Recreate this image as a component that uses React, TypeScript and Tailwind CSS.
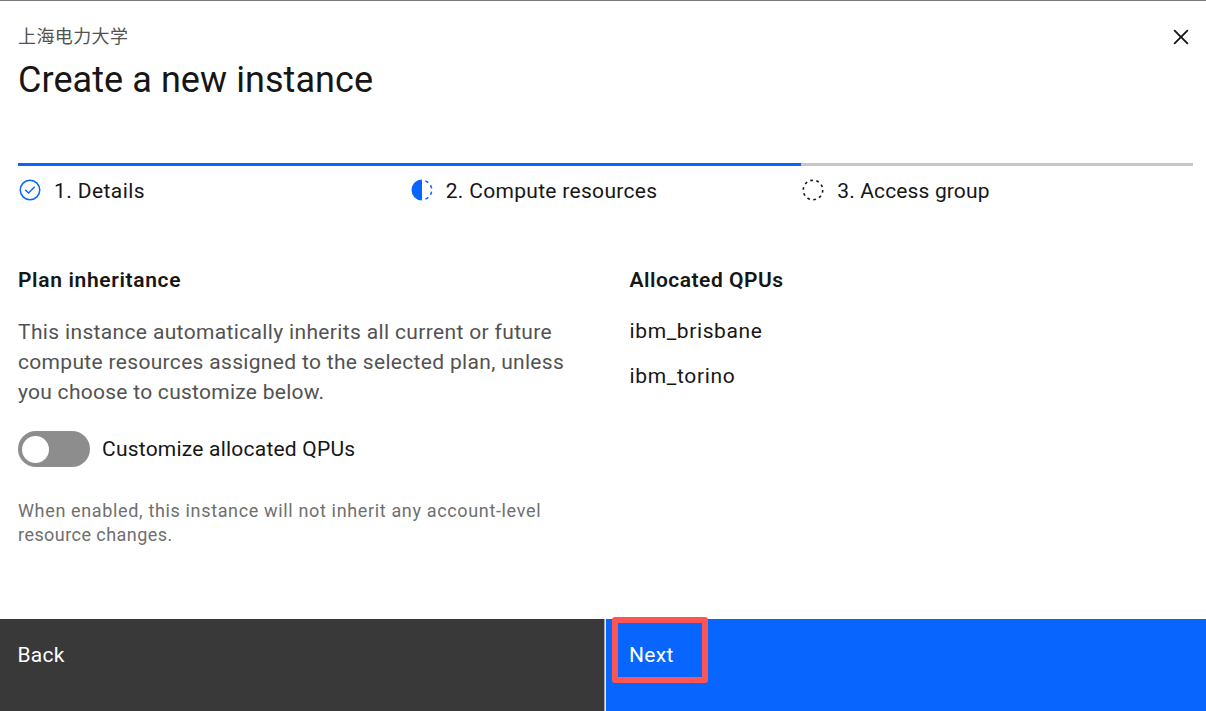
import type { ReactNode } from "react";

function CompleteIcon() {
  return (
    <svg className="size-6 shrink-0 fill-[#0866ff]" viewBox="0 0 32 32" aria-hidden="true">
      <path d="M14 21.414l-5-5.001L10.413 15 14 18.586 21.585 11 23 12.415 14 21.414z" />
      <path d="M16 2a14 14 0 1 0 14 14A14 14 0 0 0 16 2Zm0 26a12 12 0 1 1 12-12 12 12 0 0 1-12 12Z" />
    </svg>
  );
}

function CurrentIcon() {
  return (
    <svg className="size-6 shrink-0 fill-[#0866ff]" viewBox="0 0 32 32" aria-hidden="true">
      <path d="M23.7642 6.8593l1.2851-1.5315A13.976 13.976 0 0 0 20.8672 2.887l-.6836 1.8776A11.9729 11.9729 0 0 1 23.7642 6.8593ZM27.81 14l1.9677-.4128A13.8888 13.8888 0 0 0 28.14 9.0457L26.4087 10A12.52 12.52 0 0 1 27.81 14ZM20.1836 27.2354l.6836 1.8776a13.976 13.976 0 0 0 4.1821-2.4408l-1.2851-1.5315A11.9729 11.9729 0 0 1 20.1836 27.2354ZM26.4087 22L28.14 23a14.14 14.14 0 0 0 1.6382-4.5872L27.81 18.0659A12.1519 12.1519 0 0 1 26.4087 22ZM16 30V2a14 14 0 0 0 0 28Z" />
    </svg>
  );
}

function PendingIcon() {
  return (
    <svg className="size-6 shrink-0 fill-none stroke-[#161616]" viewBox="0 0 24 24" aria-hidden="true">
      <circle cx="12" cy="12" r="9.75" strokeWidth="1.6" strokeDasharray="2.7 3.426" />
    </svg>
  );
}

function Step({ icon, done, children }: { icon: ReactNode; done?: boolean; children: ReactNode }) {
  return (
    <li className={done ? "flex-1 border-t-3 border-[#0866ff]" : "flex-1 border-t-3 border-[#c6c6c6]"}>
      <div className="flex h-12 items-center gap-3">
        {icon}
        {children}
      </div>
    </li>
  );
}

export default function App() {
  return (
    <div className="flex h-[711px] w-[1206px] flex-col overflow-hidden border-t border-[#7b7b7b] bg-white font-['Roboto','Noto_Sans_CJK_SC',sans-serif] text-[21px] leading-[30px] font-normal text-[#161616]">
      <header className="flex h-[162px] items-start justify-between pl-[18px]">
        <div className="pt-6">
          <p className="text-[18px] leading-6 tracking-[0.4px] text-[#525252]">上海电力大学</p>
          <h1 className="mt-[7px] text-[36px] leading-12 tracking-[0.07px]">Create a new instance</h1>
        </div>
        <button type="button" aria-label="Close" className="mt-[21px] mr-[10px]">
          <svg className="size-[30px] fill-[#161616]" viewBox="0 0 32 32" aria-hidden="true">
            <path d="M17.4141 16 24 9.4141 22.5859 8 16 14.5859 9.4143 8 8 9.4141 14.5859 16 8 22.5859 9.4143 24 16 17.4141 22.5859 24 24 22.5859z" />
          </svg>
        </button>
      </header>

      <ol className="mr-[13px] ml-[18px] flex">
        <Step icon={<CompleteIcon />} done>
          <span className="pt-0.5 tracking-[0.42px]">1. Details</span>
        </Step>
        <Step icon={<CurrentIcon />} done>
          <span className="pt-0.5 tracking-[0.31px]">2. Compute resources</span>
        </Step>
        <Step icon={<PendingIcon />}>
          <span className="pt-0.5 tracking-[0.13px]">3. Access group</span>
        </Step>
      </ol>

      <main className="grid flex-1 grid-cols-[611.5px_1fr] pt-[51px] pl-[18px]">
        <section>
          <h2 className="font-semibold tracking-[0.65px]">Plan inheritance</h2>
          <p className="mt-[22px] text-[#525252]">
            <span className="block tracking-[0.35px]">This instance automatically inherits all current or future</span>
            <span className="block tracking-[0.32px]">compute resources assigned to the selected plan, unless</span>
            <span className="block tracking-[0.27px]">you choose to customize below.</span>
          </p>
          <div className="mt-6 flex items-center gap-3">
            <button type="button" role="switch" aria-checked="false" aria-label="Customize allocated QPUs" className="flex h-9 w-[72px] items-center rounded-full bg-[#8d8d8d] pl-1">
              <span className="size-[27px] rounded-full bg-white" />
            </button>
            <span className="tracking-[0.22px]">Customize allocated QPUs</span>
          </div>
          <p className="mt-8 text-[18px] leading-6 text-[#6f6f6f]">
            <span className="block tracking-[0.65px]">When enabled, this instance will not inherit any account-level</span>
            <span className="block tracking-[0.45px]">resource changes.</span>
          </p>
        </section>
        <section>
          <h2 className="font-semibold tracking-[0.5px]">Allocated QPUs</h2>
          <ul className="mt-[21px] flex flex-col gap-[15px]">
            <li className="tracking-[0.62px]">ibm_brisbane</li>
            <li className="tracking-[0.66px]">ibm_torino</li>
          </ul>
        </section>
      </main>

      <footer className="flex h-[92px] text-white">
        <button type="button" className="flex w-[604px] items-start bg-[#393939] pt-[21px] pl-[17.5px] tracking-[0.25px]">
          Back
        </button>
        <div className="w-px bg-[#a6a6a6]" />
        <div className="w-px bg-[#e8e8e8]" />
        <button type="button" className="relative flex flex-1 items-start bg-[#0866ff] pt-[21px] pl-[23px] tracking-[0.3px]">
          Next
          <span className="absolute -top-0.5 left-1.5 h-[66px] w-24 rounded-[3px] border-6 border-[#fc5555]" />
        </button>
      </footer>
    </div>
  );
}
